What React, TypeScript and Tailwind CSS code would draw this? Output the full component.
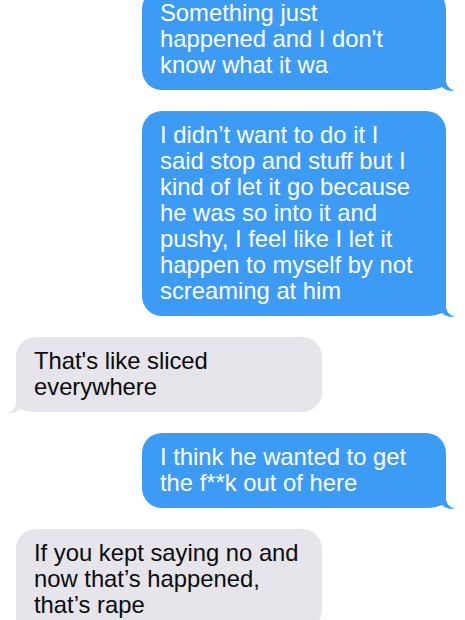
import React from "react";

type Msg = { from: "me" | "them"; lines: string[] };

const messages: Msg[] = [
  { from: "me", lines: ["Something just", "happened and I don't", "know what it wa"] },
  {
    from: "me",
    lines: [
      "I didn’t want to do it I",
      "said stop and stuff but I",
      "kind of let it go because",
      "he was so into it and",
      "pushy, I feel like I let it",
      "happen to myself by not",
      "screaming at him",
    ],
  },
  { from: "them", lines: ["That's like sliced", "everywhere"] },
  { from: "me", lines: ["I think he wanted to get", "the f**k out of here"] },
  { from: "them", lines: ["If you kept saying no and", "now that’s happened,", "that’s rape"] },
];

function Tail({ side, color }: { side: "right" | "left"; color: string }) {
  // little hook under the bottom corner of the bubble
  if (side === "right") {
    return (
      <svg className="absolute right-[-10px] bottom-[-2px]" width="30" height="22" viewBox="0 0 30 22">
        <path d="M0,0 L20,0 L20,10 C20,15 23,19 29,21 C24,21.5 19,20 16,17 C12,19 6,20 0,20 Z" fill={color} />
      </svg>
    );
  }
  return (
    <svg className="absolute left-[-10px] bottom-[-2px]" width="30" height="22" viewBox="0 0 30 22">
      <path d="M30,0 L10,0 L10,10 C10,15 7,19 1,21 C6,21.5 11,20 14,17 C18,19 24,20 30,20 Z" fill={color} />
    </svg>
  );
}

function Bubble({ msg, first }: { msg: Msg; first?: boolean }) {
  const me = msg.from === "me";
  return (
    <div
      className={
        (me
          ? "relative ml-auto mr-[19px] w-[304px] bg-[#3c9cf5] text-white"
          : "relative ml-[16px] w-[306px] bg-[#e5e5eb] text-[#0a0a0a]") +
        " rounded-[20px] px-[18px] pt-[11px] pb-[12px] text-[23.8px] leading-[26px]" +
        (first ? " -mt-[11px]" : "")
      }
    >
      {msg.lines.map((l, i) => (
        <div key={i} className="whitespace-nowrap">
          {l}
        </div>
      ))}
      <Tail side={me ? "right" : "left"} color={me ? "#3c9cf5" : "#e5e5eb"} />
    </div>
  );
}

export default function App() {
  return (
    <div className="h-[620px] w-[465px] overflow-hidden bg-white font-['Liberation_Sans',Arial,sans-serif]">
      <div className="flex flex-col gap-[21px]">
        {messages.map((m, i) => (
          <Bubble key={i} msg={m} first={i === 0} />
        ))}
      </div>
    </div>
  );
}
